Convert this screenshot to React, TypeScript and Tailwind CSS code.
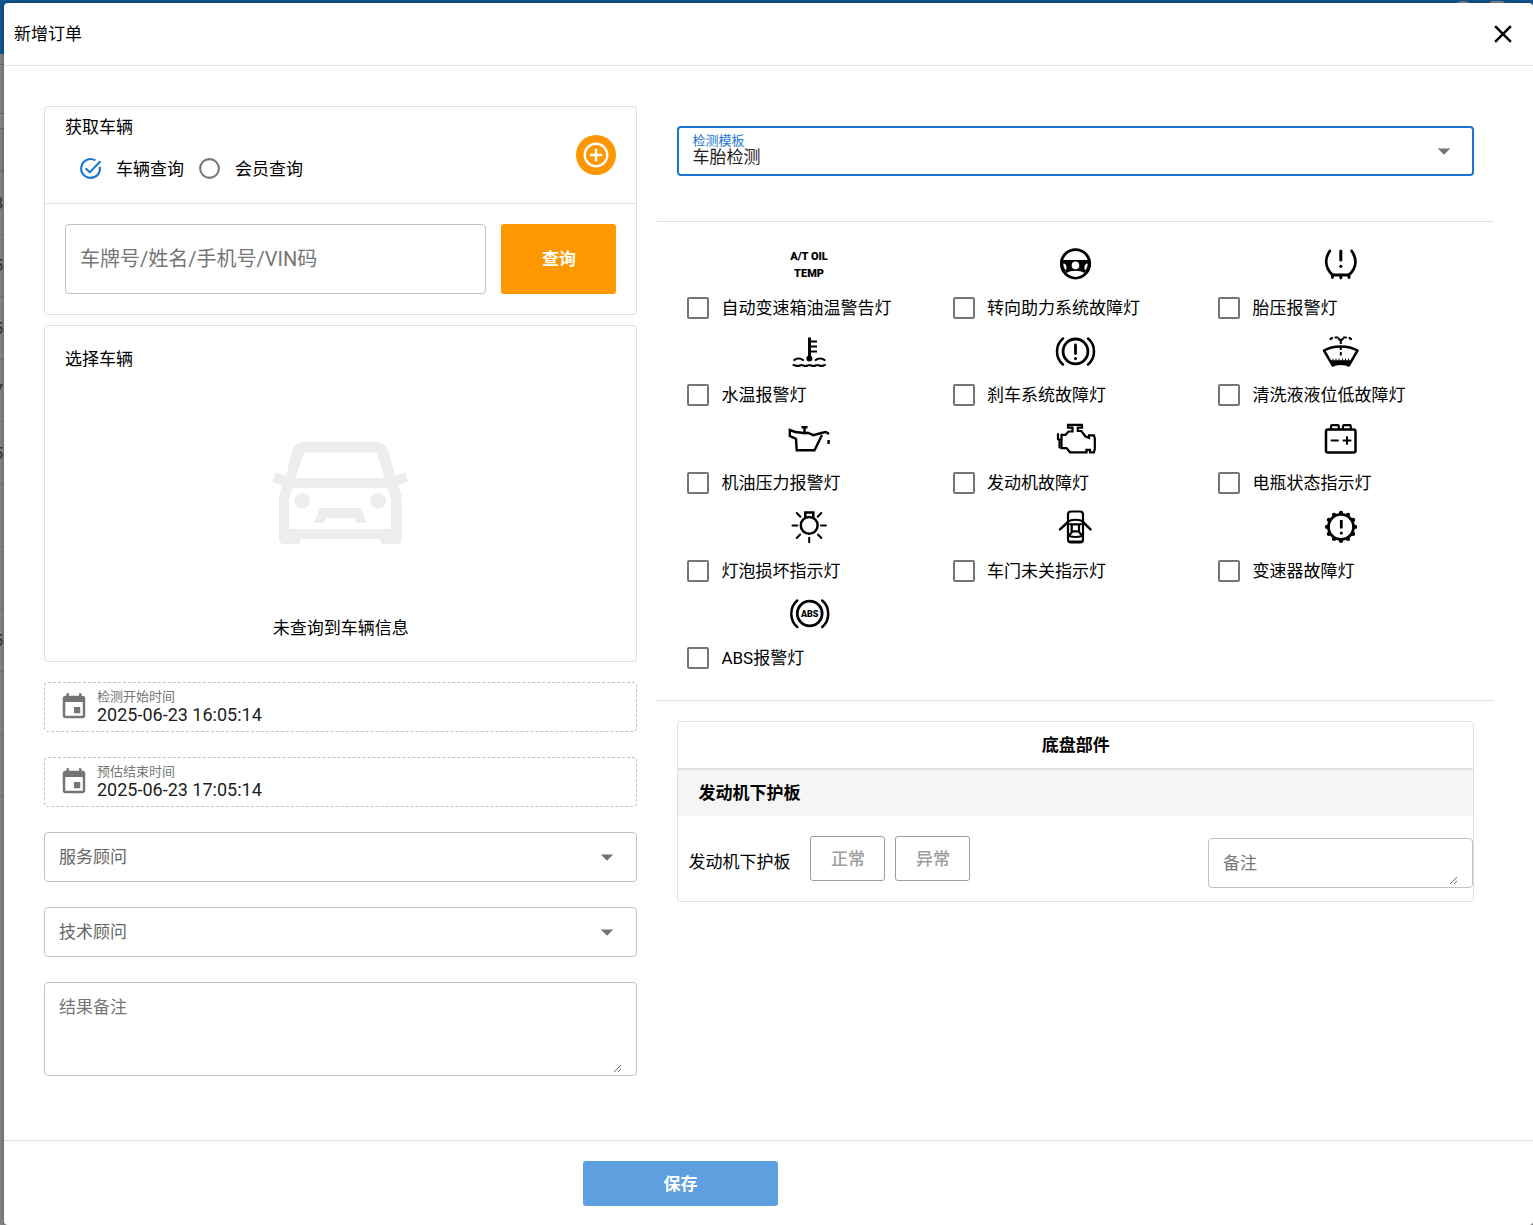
import { useState } from "react";
import type { ReactNode } from "react";

const backdropRows = ["8", "5", "5", "7", "5", "", "", "5", "", ""];

const gearTeeth = Array.from({ length: 12 }, (_, i) => (i * Math.PI) / 6);

const warningLights: { name: string; icon: ReactNode }[] = [
  {
    name: "自动变速箱油温警告灯",
    icon: (
      <g fill="currentColor" stroke="none" fontSize="11" fontWeight="900" textAnchor="middle">
        <text x="21" y="18">A/T OIL</text>
        <text x="21" y="35">TEMP</text>
      </g>
    ),
  },
  {
    name: "转向助力系统故障灯",
    icon: (
      <>
        <circle cx="21.5" cy="21.8" r="14.2" strokeWidth="2.8" />
        <path d="M7 18h29v4c-1 4-3 7-6 9-3-3-14-3-17 0-3-2-5-5-6-9z" fill="currentColor" stroke="none" />
        <g fill="white" stroke="none">
          <circle cx="21.5" cy="23.4" r="3.8" />
          <path d="M9.3 21.5c2 0 3 1.5 3.2 3.5.2 1.5-.2 2.500-.8 3.300-1.500-1.800-2.400-4.200-2.400-6.800zM33.700 21.500c-2 0-3 1.500-3.200 3.500-.2 1.500.2 2.500.8 3.300 1.500-1.800 2.400-4.200 2.400-6.800z" />
          <path d="M13.500 30.500c2.500-.3 3.500.8 4.500 2h7c1-1.200 2-2.300 4.500-2-2 2.600-4.800 4.200-8 4.200s-6-1.600-8-4.200z" />
        </g>
      </>
    ),
  },
  {
    name: "胎压报警灯",
    icon: (
      <>
        <path d="M10.800 9C6 16 5.500 25 13.500 33h16.500C38.500 25 37.500 16 32.700 9" strokeWidth="2.800" />
        <path d="M13.500 32.500v3M21.800 33.500v2.500M30 32.500v3" strokeWidth="2.800" />
        <path d="M21.800 9v9" strokeWidth="3" />
        <circle cx="21.800" cy="24.300" r="1.600" fill="currentColor" stroke="none" />
      </>
    ),
  },
  {
    name: "水温报警灯",
    icon: (
      <>
        <path d="M21.500 7.500v21" strokeWidth="3" strokeLinecap="butt" />
        <circle cx="21.400" cy="28.500" r="3" fill="currentColor" stroke="none" />
        <path d="M22 11.500h7M22 16.500h7M22 21.500h7" strokeWidth="2" strokeLinecap="butt" />
        <path d="M6.300 30c2-2 6.500-2 8.700 0M27.800 30c2-2 6.500-2 8.700 0" strokeWidth="2.200" />
        <path d="M5.500 35c2 0 2 1 4 1s2.500-1 4-1 2 1 4 1 2.500-1 4-1 2 1 4 1 2.500-1 4-1 2 1 4 1 2-1 3.500-1" strokeWidth="2.200" />
      </>
    ),
  },
  {
    name: "刹车系统故障灯",
    icon: (
      <>
        <circle cx="21.500" cy="21.400" r="12.400" strokeWidth="2.800" />
        <path d="M9 8.500C1 15 1 28 9 34.500M34 8.500c8 6.500 8 19.500 0 26" />
        <path d="M21.500 15v8.500" strokeWidth="2.800" />
        <circle cx="21.500" cy="28.400" r="1.500" fill="currentColor" stroke="none" />
      </>
    ),
  },
  {
    name: "清洗液液位低故障灯",
    icon: (
      <>
        <path d="M5 20.500c9-5.500 24.500-5.500 33.500 0l-8.300 14.300c-4-2.800-12.800-2.800-16.800 0z" />
        <path d="M11.500 31h20.500l-2 5c-4-2.500-12.500-2.500-16.500 0z" fill="currentColor" strokeWidth="1.500" />
        <path d="M14 30.500v-1.500M17 30.500v-1.500M20 30.500v-1.500M23.500 30.500v-1.500M26.500 30.500v-1.500M29.500 30.500v-1.500" strokeWidth="1" />
        <path d="M21.800 10.500v3.500M21.800 16.500v3.500M21.800 22v3.500" strokeWidth="2" strokeLinecap="butt" />
        <path d="M11.500 9l1.500-1M16.500 7.500h2M27 7.500h-2M32 9l-1.500-1M20 9l1 1M23.600 9l-1 1" strokeWidth="2.200" />
      </>
    ),
  },
  {
    name: "机油压力报警灯",
    icon: (
      <path
        d="M34 18L26.500 33.300H8.700L8 21.800 1.800 19v-6l5.500 2 4.500.5 5 .8 3-.6 5.500 2.500 8-2.200 4.200-1 2.500 1 .3 1.500M13.500 10.300h6M16.500 10v6M40.600 23v4"
        strokeWidth="2.400"
        strokeLinejoin="miter"
        strokeLinecap="butt"
      />
    ),
  },
  {
    name: "发动机故障灯",
    icon: (
      <>
        <path d="M7.500 17.800h4l3-3.300h4v-3.800h-4.500V7.800h14v2.900H23.800v3.300h3.500l4.200 5.500 3.500 1.300v-2.500h5l.8 3v10.500l-.8 3.500h-4v-2.500h-3.500v2.500H16l-3.500-4.200h-5z" strokeWidth="2.200" strokeLinejoin="miter" />
        <path d="M4 17v5.500M5.500 24v6.500M4.500 22.500h3" strokeWidth="2.200" />
      </>
    ),
  },
  {
    name: "电瓶状态指示灯",
    icon: (
      <>
        <rect x="7" y="12.500" width="29.500" height="23" rx="2" />
        <path d="M12 12V9.500c0-1 .4-1.300 1-1.300h5.800c.6 0 1 .3 1 1.300V12M24 12V9.500c0-1 .4-1.300 1-1.300h5.800c.6 0 1 .3 1 1.300V12" strokeWidth="2.200" />
        <path d="M12.500 23.500H19M24.500 23.500h7M28 20v7" strokeWidth="2" />
      </>
    ),
  },
  {
    name: "灯泡损坏指示灯",
    icon: (
      <>
        <circle cx="21.200" cy="20.400" r="8.400" />
        <path d="M17.300 12V7.500h8V12" strokeWidth="2.500" strokeLinejoin="miter" />
        <path d="M4.500 20.400h4.800M33 20.400h4.800M21.200 32.800v4.500M8.800 8l3.600 3.700M33.300 8l-3.600 3.700M8.800 33l3.300-3.500M33.300 33L30 29.500" strokeWidth="2" />
      </>
    ),
  },
  {
    name: "车门未关指示灯",
    icon: (
      <>
        <rect x="14" y="6.500" width="15" height="31" rx="3" strokeWidth="2.200" />
        <path d="M14 17L6 24.300M29 17l7.500 7.300" />
        <path d="M14 16.500c3-2.500 12-2.500 15 0M16 19l2 1M27 19l-2 1M15 30.500l3-3.500M28 30.500L25 27M15 31c3.500 1 9.500 1 13 0" strokeWidth="2" />
        <rect x="17.700" y="19.300" width="7.300" height="7" strokeWidth="2.200" />
        <path d="M15 36.500h13" strokeWidth="2" />
      </>
    ),
  },
  {
    name: "变速器故障灯",
    icon: (
      <>
        <circle cx="22" cy="21.900" r="12.500" strokeWidth="2.800" />
        {gearTeeth.map((a) => (
          <circle
            key={a}
            cx={22 + 14 * Math.cos(a)}
            cy={21.9 + 14 * Math.sin(a)}
            r="2.100"
            fill="currentColor"
            stroke="none"
          />
        ))}
        <path d="M22.300 15v8.500" strokeWidth="2.800" strokeLinecap="butt" />
        <circle cx="22.300" cy="28" r="1.500" fill="currentColor" stroke="none" />
      </>
    ),
  },
  {
    name: "ABS报警灯",
    icon: (
      <>
        <circle cx="21.700" cy="21.500" r="12.400" strokeWidth="2.800" />
        <path d="M9.300 8.500C1.300 15 1.300 28.500 9.300 35M34.200 8.500c8 6.500 8 20 0 26.500" />
        <text x="21.700" y="24.800" fill="currentColor" stroke="none" fontSize="9" fontWeight="900" textAnchor="middle">
          ABS
        </text>
      </>
    ),
  },
];

function Arrow() {
  return (
    <svg viewBox="0 0 24 24" className="pointer-events-none absolute right-[15px] top-1/2 size-[30px] -translate-y-1/2 fill-[#757575]">
      <path d="M7 10l5 5 5-5z" />
    </svg>
  );
}

function DateField({ id, label, value }: { id: string; label: string; value: string }) {
  return (
    <div className="flex h-[50px] items-center rounded border border-dashed border-[#c2c2c2] px-[14px]">
      <svg viewBox="0 0 24 24" className="mr-2 size-[30px] fill-[#757575]">
        <path d="M17 12h-5v5h5v-5zM16 1v2H8V1H6v2H5c-1.110 0-1.990.9-1.990 2L3 19c0 1.100.89 2 2 2h14c1.100 0 2-.9 2-2V5c0-1.100-.9-2-2-2h-1V1h-2zm3 18H5V8h14v11z" />
      </svg>
      <div className="flex flex-1 flex-col">
        <label htmlFor={id} className="text-[13px] leading-4 text-[#757575]">
          {label}
        </label>
        <input id={id} type="text" defaultValue={value} className="h-5 w-full text-[18px] leading-5 text-[#1d1d1d] outline-none" />
      </div>
    </div>
  );
}

function SelectField({ label }: { label: string }) {
  return (
    <div className="relative">
      <select
        aria-label={label}
        className="h-[50px] w-full appearance-none rounded border border-[#c2c2c2] bg-white px-[14px] text-[17px] text-[#666] outline-none"
      >
        <option>{label}</option>
      </select>
      <Arrow />
    </div>
  );
}

function RadioIcon({ checked }: { checked: boolean }) {
  if (!checked) {
    return (
      <svg viewBox="0 0 24 24" className="size-[25px]" fill="none" stroke="#757575" strokeWidth="2">
        <circle cx="12" cy="12" r="9" />
      </svg>
    );
  }
  return (
    <svg viewBox="0 0 24 24" className="size-[25px]" fill="none" stroke="#1976d2" strokeWidth="2">
      <path d="M21 10.500c.8 6-3.200 10.500-9 10.500a9 9 0 1 1 4.700-16.700" />
      <path d="M7.300 11.700l4 4L21.500 5" />
    </svg>
  );
}

function Backdrop() {
  return (
    <div className="absolute inset-0 overflow-hidden bg-[#8b8a89]" aria-hidden="true">
      <div className="flex h-[54px] items-start justify-end gap-[14px] bg-[#125a96] px-7 pt-px">
        <span className="size-6 rounded-full bg-[#8c8f94]" />
        <span className="size-4 rounded-sm bg-[#8c8f94]" />
      </div>
      <div className="h-[11px] border-b border-[#6f6f6f]" />
      <div className="h-[49px] border-b border-[#6f6f6f]" />
      <div className="h-[15px] border-b border-[#6f6f6f] bg-[#8f8e8d]" />
      <div className="h-[43px] border-b border-[#6f6f6f] bg-[#858786]" />
      <div className="grid h-[625px] w-full auto-rows-fr">
        {backdropRows.map((digit, i) => (
          <div key={i} className="flex items-center border-b border-[#7a7a7a]">
            <span className="flex w-[3px] justify-end text-[17px] text-[#333]">{digit}</span>
          </div>
        ))}
      </div>
    </div>
  );
}

export default function App() {
  const [mode, setMode] = useState("vehicle");

  return (
    <div className="relative min-h-screen pl-1 pt-[3px] font-[Roboto,'Noto_Sans_CJK_SC',sans-serif] text-[17px] leading-6 text-black">
      <Backdrop />

      <div className="relative flex min-h-[calc(100vh-3px)] flex-col rounded bg-white shadow-[0_0_6px_rgba(0,0,0,0.4)]">
        <header className="flex h-[63px] items-center justify-between border-b border-[#e0e0e0] pl-[10px] pr-[15px]">
          <h1>新增订单</h1>
          <button aria-label="关闭" className="flex size-[30px] items-center justify-center">
            <svg viewBox="0 0 24 24" className="size-[30px]">
              <path d="M19 6.410L17.590 5 12 10.590 6.410 5 5 6.410 10.590 12 5 17.590 6.410 19 12 13.410 17.590 19 19 17.590 13.410 12z" />
            </svg>
          </button>
        </header>

        <main className="grid flex-1 grid-cols-[83fr_117fr] items-start gap-5 py-10 pl-10 pr-[39px]">
          <div className="flex flex-col gap-5">
            <div className="flex flex-col gap-[10px]">
              {/* 获取车辆 */}
              <section className="rounded border border-[#e0e0e0]">
                <div className="flex h-[97px] items-center justify-between border-b border-[#e0e0e0] px-5">
                  <div className="self-start pt-2">
                    <h2>获取车辆</h2>
                    <div className="mt-[17px] flex gap-[13px] pl-[13px]">
                      <label className="flex items-center gap-[13px]">
                        <input
                          type="radio"
                          name="mode"
                          className="sr-only"
                          checked={mode === "vehicle"}
                          onChange={() => setMode("vehicle")}
                        />
                        <RadioIcon checked={mode === "vehicle"} />
                        车辆查询
                      </label>
                      <label className="flex items-center gap-[13px]">
                        <input
                          type="radio"
                          name="mode"
                          className="sr-only"
                          checked={mode === "member"}
                          onChange={() => setMode("member")}
                        />
                        <RadioIcon checked={mode === "member"} />
                        会员查询
                      </label>
                    </div>
                  </div>
                  <button aria-label="添加" className="flex size-10 items-center justify-center rounded-full bg-[#ff9800]">
                    <svg viewBox="0 0 24 24" className="size-[30px] fill-white">
                      <path d="M13 7h-2v4H7v2h4v4h2v-4h4v-2h-4V7zm-1-5C6.480 2 2 6.480 2 12s4.480 10 10 10 10-4.480 10-10S17.520 2 12 2zm0 18c-4.410 0-8-3.590-8-8s3.590-8 8-8 8 3.590 8 8-3.590 8-8 8z" />
                    </svg>
                  </button>
                </div>
                <div className="flex gap-[15px] p-5">
                  <input
                    type="text"
                    aria-label="车牌号/姓名/手机号/VIN码"
                    placeholder="车牌号/姓名/手机号/VIN码"
                    className="h-[70px] min-w-0 flex-1 rounded border border-[#c2c2c2] px-[14px] text-[20px] outline-none placeholder:text-[#757575]"
                  />
                  <button className="h-[70px] w-[115px] rounded-[3px] bg-[#ff9800] font-bold text-white">查询</button>
                </div>
              </section>

              {/* 选择车辆 */}
              <section className="rounded border border-[#e0e0e0] px-5 py-[21px]">
                <h2>选择车辆</h2>
                <div className="mt-[69px] flex flex-col items-center">
                  <svg viewBox="22 20 138 108" className="h-[108px] w-[138px] fill-[#ededed]">
                    <path
                      fillRule="evenodd"
                      d="M55 22h70c7 0 12 4 14 10l6 24 7-3 3.500-.5 2.500 9-9.500 4 3 11v43c0 2.500-2 4.500-4 4.500h-15.500l-2.500-5H51l-2 5H34c-3 0-5-2-5-4.500v-43l3-11-9.500-3.500 3-9.500 10.500 3.500 6-24c2-6 6-10 13-10zm2 10.500c-2.500 0-3.500 1-4.500 4L45.500 58h89L128 36.500c-1-3-2-4-4.500-4zM42.500 68L39 79v30h102V79l-3.500-11zM70 88h41l5.500 15h-10l-2-5h-28l-2.500 5H64z"
                    />
                    <circle cx="52.300" cy="80.700" r="7.700" />
                    <circle cx="128.300" cy="80.700" r="7.700" />
                  </svg>
                  <p className="mt-[68px]">未查询到车辆信息</p>
                </div>
              </section>
            </div>

            <div className="flex flex-col gap-[25px]">
              <DateField id="start" label="检测开始时间" value="2025-06-23 16:05:14" />
              <DateField id="end" label="预估结束时间" value="2025-06-23 17:05:14" />
              <SelectField label="服务顾问" />
              <SelectField label="技术顾问" />
              <div className="flex rounded border border-[#c2c2c2] px-[14px] pb-[2px]">
                <textarea
                  aria-label="结果备注"
                  placeholder="结果备注"
                  className="h-[90px] w-full resize-y pt-3 outline-none placeholder:text-[#757575]"
                />
              </div>
            </div>
          </div>

          <div>
            {/* 检测模板 */}
            <div className="px-5 pb-[45px] pt-5">
              <div className="relative">
                <label htmlFor="template" className="absolute left-[15px] top-[7px] text-[13px] leading-4 text-[#1976d2]">
                  检测模板
                </label>
                <select
                  id="template"
                  className="h-[50px] w-full appearance-none rounded border-2 border-[#1976d2] px-[13px] pt-3 text-[17px] text-[#1d1d1d] outline-none"
                >
                  <option>车胎检测</option>
                </select>
                <Arrow />
              </div>
            </div>

            <div className="grid min-h-[480px] auto-rows-fr grid-cols-3 border-y border-[#e0e0e0] p-5">
              {warningLights.map((light) => (
                <label key={light.name} className="flex flex-col">
                  <svg
                    viewBox="0 0 44 44"
                    className="size-11 self-center"
                    fill="none"
                    stroke="currentColor"
                    strokeWidth="2.500"
                    strokeLinecap="round"
                    strokeLinejoin="round"
                    aria-hidden="true"
                  >
                    {light.icon}
                  </svg>
                  <span className="flex flex-1 items-center gap-3 pl-[10px]">
                    <input
                      type="checkbox"
                      className="size-[22px] appearance-none rounded-[2px] border-2 border-[#757575] checked:border-[#1976d2] checked:bg-[#1976d2]"
                    />
                    {light.name}
                  </span>
                </label>
              ))}
            </div>

            {/* 底盘部件 */}
            <section className="mx-5 mt-5 rounded border border-[#e0e0e0]">
              <h2 className="border-b-2 border-[#e0e0e0] py-[11px] text-center font-bold">底盘部件</h2>
              <h3 className="bg-[#f5f5f5] px-5 py-[11px] font-bold">发动机下护板</h3>
              <div className="flex items-start pb-[13px] pl-[10px] pt-5">
                <span className="pt-[14px]">发动机下护板</span>
                <div className="ml-5 flex gap-[10px]">
                  <button className="h-[45px] w-[75px] rounded-[3px] border border-[#9e9e9e] font-medium text-[#9e9e9e]">正常</button>
                  <button className="h-[45px] w-[75px] rounded-[3px] border border-[#9e9e9e] font-medium text-[#9e9e9e]">异常</button>
                </div>
                <div className="ml-auto mt-[2px] flex w-[265px] rounded border border-[#c2c2c2] px-[14px] pb-[2px]">
                  <textarea
                    aria-label="备注"
                    placeholder="备注"
                    className="h-[46px] w-full resize-y pt-3 outline-none placeholder:text-[#757575]"
                  />
                </div>
              </div>
            </section>
          </div>
        </main>

        <footer className="flex justify-center border-t border-[#e0e0e0] pb-[19px] pr-44 pt-5">
          <button className="h-[45px] w-[195px] rounded-[3px] bg-[#5e9fe0] font-bold text-white">保存</button>
        </footer>
      </div>
    </div>
  );
}
